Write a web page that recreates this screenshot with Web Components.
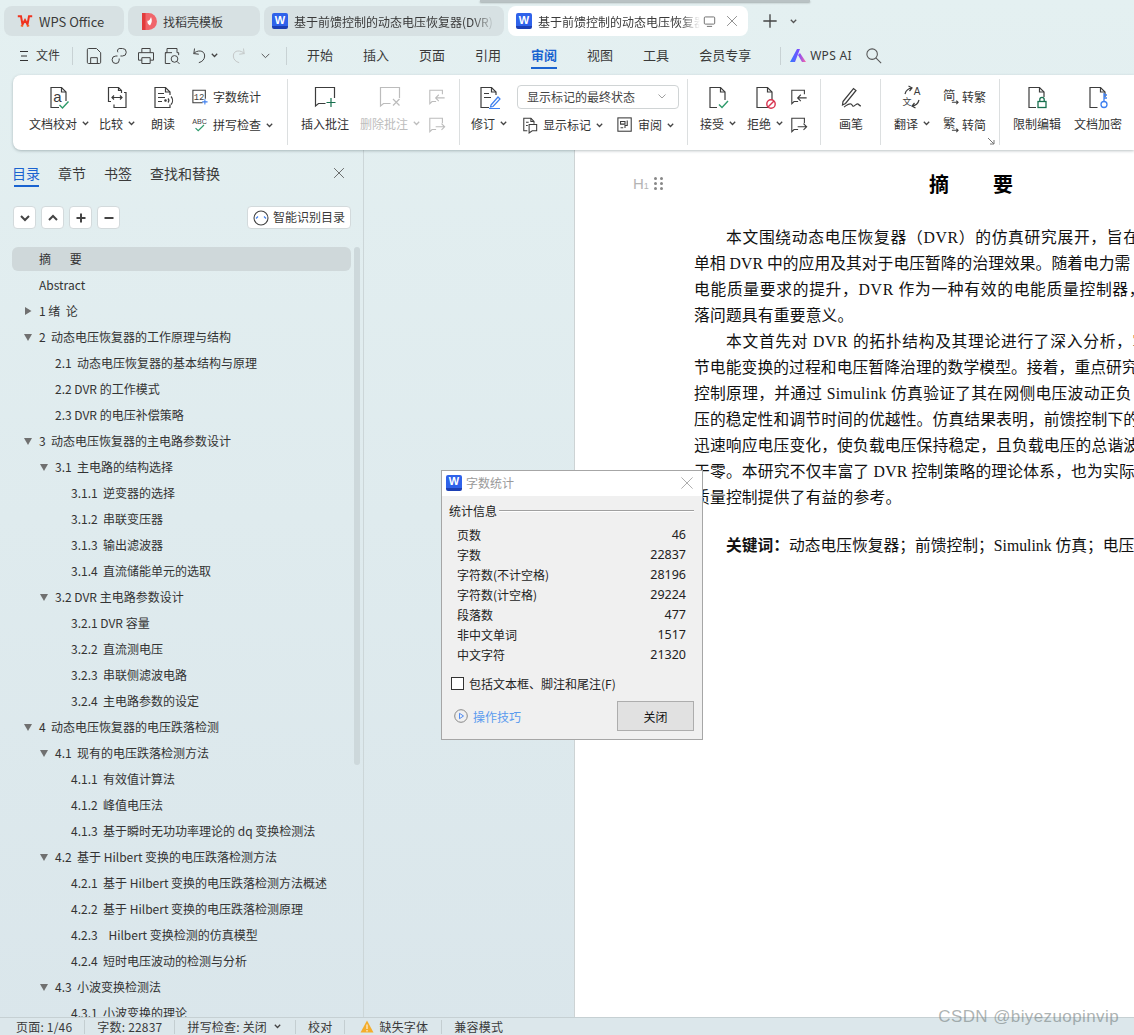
<!DOCTYPE html>
<html lang="zh-CN">
<head>
<meta charset="utf-8">
<title>WPS 审阅</title>
<style>
  html, body { margin: 0; padding: 0; height: 100%; overflow: hidden; }
  body { font-family: "Noto Sans CJK SC", "Noto Sans", sans-serif; color: #333; }
</style>
</head>
<body>
<wps-app></wps-app>
<script>
const UI_FONT = '"Noto Sans CJK SC", "Noto Sans", sans-serif';
const SVG_FONT = UI_FONT.replace(/"/g, "'");
const G = '#2e9a6b', B = '#3d7ff0', R = '#d8334f', D = '#3c3c3c', L = '#bcbcbc';
const page = 'M4 2.5h10.5l4.5 4.5v15.5H4z';
const fold = 'M14.5 2.5V7H19';
const label = (x, y, size, t, font) => `<text x="${x}" y="${y}" font-size="${size}" text-anchor="middle" fill="${D}" stroke="none" font-family="${font || 'Liberation Sans'}">${t}</text>`;

const ICONS = {
  proof: `<path d="M12 22.500H4v-20h10.500L19 7v9"/><path d="${fold}"/>${label(10.5, 16.5, 15, 'a')}<path d="M12.500 20l3 3 6-6.500" stroke="${G}" stroke-width="1.400"/>`,
  compare: `<path d="M6 16.500H3.500v-14h10l3 3v2.500M19 7.500h2v15H9v-3"/><path d="M13.500 2.500v3h3"/><path d="M7 12.500h10M9 10.500l-2 2 2 2M15 10.500l2 2-2 2"/>`,
  read: `<path d="M19 10V7l-4.500-4.500H4v20h15v-3"/><path d="${fold}"/><path d="M7 8.500h6M7 12.500h7M7 16.500h4"/><path d="M17 13.500a3 3 0 0 1 0 4M20 11.500a6 6 0 0 1 0 8"/><circle cx="14.500" cy="15.500" r=".7" fill="${D}"/>`,
  count: `<path d="M12 15.500H1v-14h14V11"/>${label(8, 12, 10, '12', 'Liberation Mono')}<path d="M14.500 11.500v6M11.500 14.500h6" stroke="${B}"/>`,
  spell: `${label(8.5, 8, 8, 'ABC')}<path d="M4 12.500l3 3 6.500-6.500" stroke="${G}" stroke-width="1.300"/>`,
  cmtAdd: `<path d="M12.500 18.500H5.500L2.500 21V2.500h19V13"/><path d="M18 13v9M13.500 17.500h9" stroke="#17704f"/>`,
  cmtDel: `<path d="M12.500 18.500H5.500L2.500 21V2.500h19V13"/><path d="M15 14l6.500 6.500M21.500 14L15 20.500"/>`,
  cmtPrev: `<path d="M9 15H4.500L2 17.500V2.500h14V7"/><path d="M8.500 11h10M12 7.500L8.500 11l3.500 3.500"/>`,
  cmtNext: `<path d="M9 15H4.500L2 17.500V2.500h14V8"/><path d="M8.500 12h10M15 8.500l3.500 3.500-3.500 3.500"/>`,
  track: `<path d="M12 22.500H4v-20h10.500L19 7v3"/><path d="${fold}"/><path d="M7 8.500h5M7 12.500h7"/><path d="M14 20l7-8 2 2-7 7.500-2.500.5zM12 23.500h11" stroke="${B}"/>`,
  marks: `<path d="M6 15.500H2V1.500h8l3.500 3.500v2.500"/><path d="M10 1.500V5h3.500"/><path d="M4.500 6h3M4.500 9.500h2"/><path d="M8 8.500h8.500v7h-5L8 18z"/>`,
  pane: `<rect x="1" y="1" width="15" height="15"/><path d="M4 5h5v3H4zM11.500 4v5.500h-2.500v3M4 12h3"/>`,
  accept: `<path d="M11 22.500H4v-20h10.500L19 7v8"/><path d="${fold}"/><path d="M13 19.500l3 3 6-6.500" stroke="${G}" stroke-width="1.400"/>`,
  reject: `<path d="${page}"/><path d="${fold}"/><circle cx="18" cy="19" r="4.200" stroke="${R}" stroke-width="1.400" fill="#fff"/><path d="M15 22l6-6" stroke="${R}" stroke-width="1.400"/>`,
  pen: `<path d="M4 16.500L14.500 3.500l2.500 2L6.500 18.500 3.500 20z"/><path d="M5 22c3-2 5-4 7-3s1 3 3 2 3-3 4-2 2 2 3 2"/>`,
  translate: `<path d="M5 9a8 8 0 0 1 7-6M8.500 1l3.500 2-2.500 3"/><path d="M19 15a8 8 0 0 1-7 6M15.500 23L12 21l2.500-3"/>${label(17, 10, 10, 'A')}${label(7, 20, 9, '文', SVG_FONT)}`,
  toTrad: `${label(7, 12, 14, '简', SVG_FONT)}<path d="M10 15h7M15 13l2 2-2 2"/>`,
  toSimp: `${label(7, 12, 14, '繁', SVG_FONT)}<path d="M10 15h7M15 13l2 2-2 2"/>`,
  lock: `<path d="M11 22.500H4v-20h10.500L19 7v5"/><path d="${fold}"/><rect x="13" y="16.500" width="8" height="6" stroke="#17704f" stroke-width="1.300"/><path d="M14.800 16.500v-2a2.200 2.200 0 0 1 4.400 0v2" stroke="#17704f" stroke-width="1.300"/>`,
  key: `<path d="M11.500 22.500H4v-20h10.500L19 7v5"/><path d="${fold}"/><circle cx="18" cy="19.500" r="3" stroke="${B}" stroke-width="1.300"/><path d="M18 16.500V8M18 10h3M18 13h3" stroke="${B}" stroke-width="1.300"/>`,
  launch: `<path d="M1 1l6 6M7 3v4H3" stroke="#777"/>`,
  save: `<path d="M4 4.500a1.500 1.500 0 0 1 1.500-1.500H15l5 5v11.500a1.500 1.500 0 0 1-1.500 1.500h-13A1.500 1.500 0 0 1 4 19.500z"/><path d="M8 21v-7h8v7"/>`,
  link: `<path d="M11 3h4a4.500 4.500 0 0 1 0 9h-2.500"/><path d="M11 3a3 3 0 0 0-1.500 4.500"/><path d="M9 12H7a4.500 4.500 0 0 0 0 9 4 4 0 0 0 4-4v-2"/>`,
  print: `<path d="M7 8V3h10v5M7 17H3V8h18v9h-4"/><path d="M7 14h10v7H7z"/>`,
  preview: `<path d="M10 21H4V8h2V3h12v5h2v3"/><path d="M4 8h8"/><circle cx="15" cy="15.500" r="4"/><path d="M18 18.500l3 3"/>`,
  undo: `<path d="M7 9c3-4 13-5 13 3 0 4-3 7-7 8"/><path d="M7 3v6h6" transform="rotate(8 7 9)"/>`,
  redo: `<path d="M17 9c-3-4-13-5-13 3 0 4 3 7 7 8"/><path d="M17 3v6h-6" transform="rotate(-8 17 9)"/>`,
  chevLg: `<path d="M5 9l7 7 7-7"/>`,
  search: `<circle cx="9.500" cy="9.500" r="7"/><path d="M14.500 14.500l7 7"/>`,
  close: `<path d="M3 3l14 14M17 3L3 17"/>`,
  plus: `<path d="M12 2v20M2 12h20"/>`,
  monitor: `<rect x="2" y="3" width="16" height="11" rx="1.500"/><path d="M6 17.500h8"/>`
};

function icon(name, size, color, sw, vb) {
  return `<svg width="${size}" height="${size}" viewBox="0 0 ${vb || 24} ${vb || 24}" fill="none" stroke="${color || D}" stroke-width="${sw || 1.2}" style="overflow:visible;display:block;flex:none">${ICONS[name]}</svg>`;
}
function chev(color) {
  return `<svg width="7" height="5" viewBox="0 0 7 5" fill="none" stroke="${color || '#444'}" stroke-width="1.300" style="display:block;flex:none"><path d="M.8 .8L3.500 3.500 6.200 .8"/></svg>`;
}
const wordIcon = size => `<span style="flex:none;width:${size}px;height:${size}px;border-radius:2px;background:linear-gradient(#2f62ea 80%,#1c3fb4 80%);color:#fff;font:bold ${size - 5}px/1 'Liberation Sans',sans-serif;display:flex;align-items:center;justify-content:center;padding-bottom:2px;box-sizing:border-box">W</span>`;

class WpsTab extends HTMLElement {
  constructor() { super(); this.attachShadow({ mode: 'open' }); }
  connectedCallback() {
    const active = this.hasAttribute('active');
    this.shadowRoot.innerHTML = `
      <style>
        :host { display: flex; align-items: center; height: 30px; box-sizing: border-box; border-radius: 8px; background: ${active ? '#fff' : '#d7e1e3'}; font: 12px ${UI_FONT}; color: #3a3a3a; flex: none; }
        .t { flex: 1; min-width: 0; white-space: nowrap; overflow: hidden; -webkit-mask-image: linear-gradient(90deg,#000 88%,transparent); mask-image: linear-gradient(90deg,#000 88%,transparent); }
        .t.plain { -webkit-mask-image: none; mask-image: none; }
      </style>
      <slot name="icon"></slot><div class="t ${this.hasAttribute('plain') ? 'plain' : ''}"><slot></slot></div><slot name="tail"></slot>`;
  }
}
customElements.define('wps-tab', WpsTab);

class WpsTabbar extends HTMLElement {
  constructor() { super(); this.attachShadow({ mode: 'open' }); }
  connectedCallback() {
    this.shadowRoot.innerHTML = `
      <style>
        :host { display: flex; gap: 4px; height: 36px; box-sizing: border-box; padding: 6px 0 0 4px; align-items: flex-start; position: relative; }
        .shade { position: absolute; left: 480px; top: 0; width: 330px; height: 2px; background: #b9c2c4; box-shadow: 0 1px 2px rgba(0,0,0,.3); }
        .add { display: flex; align-items: center; height: 30px; margin-left: 10px; gap: 12px; }
      </style>
      <div class="shade"></div>
      <wps-tab plain style="width:120px;font-size:13px">
        <span slot="icon" style="display:flex;margin:0 6px 0 13px">
          <svg width="16" height="12" viewBox="0 0 16 12" fill="none" stroke="#f0331f" stroke-width="2"><path d="M.8 1.200h3.200L5.500 9.500 8 5l2.500 4.500L12 1.200h3.200"/><path d="M3.800 10.800h2.400M9.800 10.800h2.400" stroke="#f5601f" stroke-width="1.500"/></svg>
        </span>WPS Office</wps-tab>
      <wps-tab plain style="width:132px">
        <span slot="icon" style="display:flex;margin:0 6px 0 14px">
          <svg width="15" height="17" viewBox="0 0 15 17"><path d="M0 0h6.500a8 8 0 0 1 0 17H0z" fill="#f0656a"/><path d="M0 0h3.500v17H0z" fill="#e23c3c"/><path d="M9 4c1 3 1.500 5-1 8.500-2-1-3-3-2.500-5 1.200 1 2.500-.5 3.500-3.500z" fill="#fff"/></svg>
        </span>找稻壳模板</wps-tab>
      <wps-tab style="width:240px;padding-right:8px">
        <span slot="icon" style="display:flex;margin:0 6px 0 8px">${wordIcon(16)}</span>基于前馈控制的动态电压恢复器(DVR)</wps-tab>
      <wps-tab active style="width:240px;padding-right:9px">
        <span slot="icon" style="display:flex;margin:0 6px 0 8px">${wordIcon(16)}</span>基于前馈控制的动态电压恢复器
        <span slot="tail" style="display:flex;align-items:center;gap:9px;margin-left:3px">${icon('monitor', 13, '#666', 1.400, 20)}${icon('close', 14, '#888', 1.300, 20)}</span></wps-tab>
      <div class="add">${icon('plus', 16, '#444', 2)}${chev('#555')}</div>`;
  }
}
customElements.define('wps-tabbar', WpsTabbar);

class WpsMenubar extends HTMLElement {
  constructor() { super(); this.attachShadow({ mode: 'open' }); }
  connectedCallback() {
    const items = ['开始', '插入', '页面', '引用', '审阅', '视图', '工具', '会员专享'];
    const tools = ['save', 'link', 'print', 'preview'];
    this.shadowRoot.innerHTML = `
      <style>
        :host { display: flex; align-items: center; height: 39px; padding-left: 20px; font: 13px ${UI_FONT}; color: #3a3a3a; }
        .sep { width: 1px; height: 18px; background: #c8d2d4; flex: none; }
        .file { font-size: 12px; margin-left: 8px; padding-bottom: 2px; }
        .tools { display: flex; align-items: center; gap: 6px; margin-left: 11px; }
        .items { display: flex; gap: 30px; margin: 0 29px 0 20px; padding-bottom: 2px; }
        .items span { position: relative; }
        .items .on { color: #1a63d0; font-weight: 700; }
        .items .on::after { content: ""; position: absolute; left: 0; right: 0; top: 22px; height: 2px; background: #1a63d0; }
        .ai { display: flex; align-items: center; gap: 4px; margin-left: 9px; font: 12px "Noto Sans", sans-serif; letter-spacing: .3px; }
      </style>
      <svg width="8" height="10" viewBox="0 0 8 10" stroke="#333" fill="none"><path d="M0 .5h8M1 5h6M0 9.500h8"/></svg>
      <span class="file">文件</span>
      <div class="sep" style="margin-left:12px"></div>
      <div class="tools">
        ${tools.map(t => icon(t, 20, '#444')).join('')}
        ${icon('undo', 20, '#444')}<span style="margin-left:-3px">${chev()}</span>
        <span style="margin-left:6px">${icon('redo', 20, '#c4c8c8')}</span>
        <span style="margin-left:3px">${icon('chevLg', 13, '#555', 1.800)}</span>
      </div>
      <div class="sep" style="margin-left:14px"></div>
      <div class="items">${items.map(i => `<span class="${i === '审阅' ? 'on' : ''}">${i}</span>`).join('')}</div>
      <div class="sep"></div>
      <div class="ai">
        <svg width="16" height="14" viewBox="0 0 16 14"><defs><linearGradient id="ai" x1="0" x2="1"><stop offset="0" stop-color="#2f7bff"/><stop offset=".55" stop-color="#7c4dff"/><stop offset="1" stop-color="#ff6aa0"/></linearGradient></defs><path d="M0 13L7 0h3L5 13zM8 6l2-2 6 9h-4z" fill="url(#ai)"/></svg>
        <span>WPS AI</span>
      </div>
      <span style="margin-left:13px">${icon('search', 18, '#555', 1.400)}</span>`;
  }
}
customElements.define('wps-menubar', WpsMenubar);

class RbGroup extends HTMLElement {
  constructor() { super(); this.attachShadow({ mode: 'open' }); }
  connectedCallback() {
    this.style.width = this.getAttribute('w') + 'px';
    this.style.paddingLeft = (this.getAttribute('pad') || 0) + 'px';
    this.shadowRoot.innerHTML = `
      <style>
        :host { display: flex; box-sizing: border-box; height: 66px; padding-top: 4px; border-right: 1px solid #dcdfe0; flex: none; position: relative; }
        :host([last]) { border-right: 0; }
      </style><slot></slot>`;
  }
}
customElements.define('rb-group', RbGroup);

class RbBtn extends HTMLElement {
  constructor() { super(); this.attachShadow({ mode: 'open' }); }
  connectedCallback() {
    const off = this.hasAttribute('off');
    this.style.width = this.getAttribute('w') + 'px';
    this.shadowRoot.innerHTML = `
      <style>
        :host { display: flex; flex-direction: column; align-items: center; flex: none; font: 12px ${UI_FONT}; color: ${off ? '#bdbdbd' : '#333'}; }
        .i { height: 28px; display: flex; align-items: center; }
        .l { height: 24px; display: flex; align-items: center; gap: 5px; white-space: nowrap; }
      </style>
      <div class="i">${icon(this.getAttribute('icon'), 24, off ? L : D)}</div>
      <div class="l">${this.getAttribute('label')}${this.hasAttribute('chev') ? chev(off ? L : '#444') : ''}</div>`;
  }
}
customElements.define('rb-btn', RbBtn);

class RbSmall extends HTMLElement {
  constructor() { super(); this.attachShadow({ mode: 'open' }); }
  connectedCallback() {
    const off = this.hasAttribute('off');
    const text = this.getAttribute('label');
    const size = this.getAttribute('size') || 16;
    const gap = this.getAttribute('gap') || 5;
    this.shadowRoot.innerHTML = `
      <style>
        :host { display: flex; align-items: center; height: 28px; gap: ${gap}px; font: 12px ${UI_FONT}; color: #333; white-space: nowrap; flex: none; }
        span { padding-bottom: 2px; }
      </style>
      ${icon(this.getAttribute('icon'), size, off ? L : D, 1.200, this.getAttribute('vb') || 18)}
      ${text ? `<span>${text}</span>` : ''}${this.hasAttribute('chev') ? chev() : ''}`;
  }
}
customElements.define('rb-small', RbSmall);

class RbCol extends HTMLElement {
  constructor() {
    super();
    this.attachShadow({ mode: 'open' }).innerHTML = `<style>:host { display: flex; flex-direction: column; flex: none; }</style><slot></slot>`;
  }
}
customElements.define('rb-col', RbCol);

class RbSelect extends HTMLElement {
  constructor() { super(); this.attachShadow({ mode: 'open' }); }
  connectedCallback() {
    this.shadowRoot.innerHTML = `
      <style>
        :host { display: flex; align-items: center; justify-content: space-between; box-sizing: border-box; width: 162px; height: 24px; margin: 2px 0; padding: 0 10px 2px 9px; border: 1px solid #d0d4d5; border-radius: 4px; font: 12px ${UI_FONT}; color: #444; }
      </style><slot></slot>${icon('chevLg', 12, '#777', 1.400)}`;
  }
}
customElements.define('rb-select', RbSelect);

class WpsRibbon extends HTMLElement {
  constructor() { super(); this.attachShadow({ mode: 'open' }); }
  connectedCallback() {
    this.shadowRoot.innerHTML = `
      <style>
        :host { display: flex; box-sizing: border-box; height: 75px; margin-left: 13px; padding: 4px 0; background: #fff; border-radius: 8px 0 0 8px; box-shadow: 0 1px 3px rgba(60,80,85,.35); position: relative; z-index: 2; }
        .launch { position: absolute; right: 4px; bottom: 0; }
      </style>
      <rb-group w="275" pad="11">
        <rb-btn icon="proof" label="文档校对" w="70" chev></rb-btn>
        <rb-btn icon="compare" label="比较" w="46" chev></rb-btn>
        <rb-btn icon="read" label="朗读" w="46"></rb-btn>
        <rb-col style="margin-left:6px">
          <rb-small icon="count" label="字数统计"></rb-small>
          <rb-small icon="spell" label="拼写检查" chev></rb-small>
        </rb-col>
      </rb-group>
      <rb-group w="172" pad="7">
        <rb-btn icon="cmtAdd" label="插入批注" w="60"></rb-btn>
        <rb-btn icon="cmtDel" label="删除批注" w="70" off chev></rb-btn>
        <rb-col style="margin-left:3px">
          <rb-small icon="cmtPrev" size="18" off vb="20"></rb-small>
          <rb-small icon="cmtNext" size="18" off vb="20"></rb-small>
        </rb-col>
      </rb-group>
      <rb-group w="228" pad="6">
        <rb-btn icon="track" label="修订" w="46" chev></rb-btn>
        <rb-col style="margin-left:5px">
          <rb-select>显示标记的最终状态</rb-select>
          <div style="display:flex;padding-left:5px">
            <rb-small icon="marks" label="显示标记" chev style="width:95px"></rb-small>
            <rb-small icon="pane" label="审阅" chev></rb-small>
          </div>
        </rb-col>
      </rb-group>
      <rb-group w="133" pad="7">
        <rb-btn icon="accept" label="接受" w="46" chev></rb-btn>
        <rb-btn icon="reject" label="拒绝" w="46" chev style="margin-left:1px"></rb-btn>
        <rb-col style="margin-left:2px">
          <rb-small icon="cmtPrev" size="18" vb="20"></rb-small>
          <rb-small icon="cmtNext" size="18" vb="20"></rb-small>
        </rb-col>
      </rb-group>
      <rb-group w="60">
        <rb-btn icon="pen" label="画笔" w="60"></rb-btn>
      </rb-group>
      <rb-group w="119" pad="8">
        <rb-btn icon="translate" label="翻译" w="46" chev></rb-btn>
        <rb-col style="margin-left:8px">
          <rb-small icon="toTrad" label="转繁" gap="3"></rb-small>
          <rb-small icon="toSimp" label="转简" gap="3"></rb-small>
        </rb-col>
        <span class="launch">${icon('launch', 8, '#777', 1, 8)}</span>
      </rb-group>
      <rb-group w="134" pad="7" last>
        <rb-btn icon="lock" label="限制编辑" w="60"></rb-btn>
        <rb-btn icon="key" label="文档加密" w="60" style="margin-left:1px"></rb-btn>
      </rb-group>`;
  }
}
customElements.define('wps-ribbon', WpsRibbon);

class TocItem extends HTMLElement {
  constructor() { super(); this.attachShadow({ mode: 'open' }); }
  connectedCallback() {
    const lv = +this.getAttribute('lv');
    const tw = this.getAttribute('tw');
    const left = 28 + (lv - 1) * 16;
    const arrow = tw === 'o'
      ? '<path d="M0 1l8 0-4 7z" fill="#707070"/>'
      : tw === 'c' ? '<path d="M1 0l6.500 4-6.500 4z" fill="#707070"/>' : '';
    this.shadowRoot.innerHTML = `
      <style>
        :host { display: flex; align-items: center; box-sizing: border-box; height: 24px; flex: none; padding: 0 0 1px ${left - 16}px; border-radius: 6px; font: 12px ${UI_FONT}; color: #333; white-space: pre; }
        :host([sel]) { background: #cfd8da; }
        svg { flex: none; width: 8px; height: 8px; margin-right: 7px; }
      </style>
      <svg viewBox="0 0 8 8">${arrow}</svg><slot></slot>`;
  }
}
customElements.define('toc-item', TocItem);

class TocButton extends HTMLElement {
  constructor() { super(); this.attachShadow({ mode: 'open' }); }
  connectedCallback() {
    const paths = { down: 'M3 5l4 4 4-4', up: 'M3 9l4-4 4 4', plus: 'M2.500 7h9M7 2.500v9', minus: 'M2.500 7h9' };
    this.shadowRoot.innerHTML = `
      <style>
        :host { display: flex; align-items: center; justify-content: center; width: 23px; height: 23px; box-sizing: border-box; background: #fff; border: 1px solid #d3dadc; border-radius: 4px; flex: none; }
      </style>
      <svg width="14" height="14" viewBox="0 0 14 14" fill="none" stroke="#444" stroke-width="2"><path d="${paths[this.getAttribute('kind')]}"/></svg>`;
  }
}
customElements.define('toc-button', TocButton);

const TOC = [
  [1, '', '摘       要', 1], [1, '', 'Abstract'], [1, 'c', '1 绪  论'],
  [1, 'o', '2  动态电压恢复器的工作原理与结构'],
  [2, '', '2.1  动态电压恢复器的基本结构与原理'], [2, '', '2.2 DVR 的工作模式'], [2, '', '2.3 DVR 的电压补偿策略'],
  [1, 'o', '3  动态电压恢复器的主电路参数设计'],
  [2, 'o', '3.1  主电路的结构选择'],
  [3, '', '3.1.1  逆变器的选择'], [3, '', '3.1.2  串联变压器'], [3, '', '3.1.3  输出滤波器'], [3, '', '3.1.4  直流储能单元的选取'],
  [2, 'o', '3.2 DVR 主电路参数设计'],
  [3, '', '3.2.1 DVR 容量'], [3, '', '3.2.2  直流测电压'], [3, '', '3.2.3  串联侧滤波电路'], [3, '', '3.2.4  主电路参数的设定'],
  [1, 'o', '4  动态电压恢复器的电压跌落检测'],
  [2, 'o', '4.1  现有的电压跌落检测方法'],
  [3, '', '4.1.1  有效值计算法'], [3, '', '4.1.2  峰值电压法'], [3, '', '4.1.3  基于瞬时无功功率理论的 dq 变换检测法'],
  [2, 'o', '4.2  基于 Hilbert 变换的电压跌落检测方法'],
  [3, '', '4.2.1  基于 Hilbert 变换的电压跌落检测方法概述'], [3, '', '4.2.2  基于 Hilbert 变换的电压跌落检测原理'],
  [3, '', '4.2.3    Hilbert 变换检测的仿真模型'], [3, '', '4.2.4  短时电压波动的检测与分析'],
  [2, 'o', '4.3  小波变换检测法'],
  [3, '', '4.3.1  小波变换的理论']
];

class TocPanel extends HTMLElement {
  constructor() { super(); this.attachShadow({ mode: 'open' }); }
  connectedCallback() {
    const tabs = ['目录', '章节', '书签', '查找和替换'];
    this.shadowRoot.innerHTML = `
      <style>
        :host { display: flex; flex-direction: column; flex: none; width: 364px; box-sizing: border-box; border-right: 1px solid #ccd6d8; padding-top: 13px; overflow: hidden; font: 14px ${UI_FONT}; color: #3a3a3a; }
        .tabs { display: flex; align-items: center; height: 20px; padding: 0 17px 0 12px; gap: 18px; flex: none; }
        .tabs span { position: relative; }
        .tabs .on { color: #1a63d0; }
        .tabs .on::after { content: ""; position: absolute; left: 2px; right: 1px; top: 22px; height: 2px; background: #1a63d0; }
        .tabs svg { margin-left: auto; }
        .bar { display: flex; align-items: center; gap: 5px; padding: 0 12px 0 13px; margin-top: 23px; height: 23px; flex: none; }
        .smart { margin-left: auto; display: flex; align-items: center; gap: 4px; height: 23px; width: 104px; box-sizing: border-box; padding-left: 5px; background: #fff; border: 1px solid #d3dadc; border-radius: 4px; font-size: 12px; white-space: nowrap; }
        .smart span { padding-bottom: 2px; }
        .body { display: flex; gap: 3px; margin-top: 17px; flex: 1; min-height: 0; padding-left: 12px; }
        .list { width: 339px; flex: none; display: flex; flex-direction: column; gap: 2px; padding-top: 1px; }
        .scroll { width: 6px; height: 518px; margin-top: 1px; background: #cdd8db; border-radius: 3px; flex: none; }
      </style>
      <div class="tabs">
        ${tabs.map((t, i) => `<span class="${i ? '' : 'on'}">${t}</span>`).join('')}
        ${icon('close', 14, '#555', 1.200, 20)}
      </div>
      <div class="bar">
        <toc-button kind="down"></toc-button><toc-button kind="up"></toc-button><toc-button kind="plus"></toc-button><toc-button kind="minus"></toc-button>
        <div class="smart">
          <svg width="16" height="16" viewBox="0 0 16 16" fill="none"><circle cx="8" cy="8" r="7" stroke="#444" stroke-width="1.100"/><path d="M3 8.500L5 6.500M13 8.500L11 6.500" stroke="${B}" stroke-width="1.100"/></svg>
          <span>智能识别目录</span>
        </div>
      </div>
      <div class="body">
        <div class="list">${TOC.map(r => `<toc-item lv="${r[0]}" tw="${r[1]}"${r[3] ? ' sel' : ''}>${r[2]}</toc-item>`).join('')}</div>
        <div class="scroll"></div>
      </div>`;
  }
}
customElements.define('toc-panel', TocPanel);

class DocPage extends HTMLElement {
  constructor() { super(); this.attachShadow({ mode: 'open' }); }
  connectedCallback() {
    // the paragraphs are justified in the source, so each line has its own spacing
    const lines = [
      ['本文围绕动态电压恢复器（DVR）的仿真研究展开，旨在', .7, 1],
      ['单相 DVR 中的应用及其对于电压暂降的治理效果。随着电力需', .05],
      ['电能质量要求的提升，DVR 作为一种有效的电能质量控制器，', .7],
      ['落问题具有重要意义。', .2],
      ['本文首先对 DVR 的拓扑结构及其理论进行了深入分析，掌', .7, 1],
      ['节电能变换的过程和电压暂降治理的数学模型。接着，重点研究', .1],
      ['控制原理，并通过 Simulink 仿真验证了其在网侧电压波动正负', .3],
      ['压的稳定性和调节时间的优越性。仿真结果表明，前馈控制下的', .15],
      ['迅速响应电压变化，使负载电压保持稳定，且负载电压的总谐波', .15],
      ['干零。本研究不仅丰富了 DVR 控制策略的理论体系，也为实际', .2],
      ['质量控制提供了有益的参考。', .2]
    ];
    this.shadowRoot.innerHTML = `
      <style>
        :host { display: block; flex: 1; min-width: 0; background: #fff; border-left: 1px solid #cdd3d4; overflow: hidden; font: 15.750px/26px "Liberation Serif", "Noto Sans CJK SC", serif; color: #111; }
        .head { display: flex; align-items: center; height: 28px; margin-top: 19px; padding-left: 58px; }
        .h { color: #b4b4b4; font: 15px "Liberation Sans", sans-serif; width: 15px; white-space: nowrap; }
        .h small { font-size: 9px; }
        .grip { display: grid; grid-template-columns: 3px 3px; gap: 2px 3px; margin-left: 6px; }
        .grip i { width: 3px; height: 3px; border-radius: 50%; background: #888; }
        h1 { margin: 0 0 0 266px; font: bold 20px "Noto Sans CJK SC", serif; display: flex; gap: 44px; color: #000; }
        .txt { padding: 28px 0 0 119px; white-space: nowrap; }
        .txt p { margin: 0; height: 26px; }
        .txt p.in { text-indent: 32px; }
        .txt p.kw { margin-top: 22px; text-indent: 32px; }
      </style>
      <div class="head">
        <span class="h">H<small>1</small></span>
        <span class="grip">${'<i></i>'.repeat(6)}</span>
        <h1><span>摘</span><span>要</span></h1>
      </div>
      <div class="txt">
        ${lines.map(l => `<p class="${l[2] ? 'in' : ''}" style="letter-spacing:${l[1]}px">${l[0]}</p>`).join('')}
        <p class="kw"><b>关键词：</b>动态电压恢复器；前馈控制；Simulink 仿真；电压</p>
      </div>`;
  }
}
customElements.define('doc-page', DocPage);

class StatsDialog extends HTMLElement {
  constructor() { super(); this.attachShadow({ mode: 'open' }); }
  connectedCallback() {
    const rows = [['页数', '46'], ['字数', '22837'], ['字符数(不计空格)', '28196'], ['字符数(计空格)', '29224'], ['段落数', '477'], ['非中文单词', '1517'], ['中文字符', '21320']];
    this.shadowRoot.innerHTML = `
      <style>
        :host { position: absolute; left: 441px; top: 470px; width: 262px; height: 270px; box-sizing: border-box; display: flex; flex-direction: column; background: #f0f0f0; border: 1px solid #a6a6a6; font: 12px ${UI_FONT}; color: #222; z-index: 5; }
        .title { display: flex; align-items: center; height: 25px; background: #fff; padding: 0 7px 2px 4px; box-sizing: border-box; gap: 4px; flex: none; color: #9a9a9a; }
        .title svg { margin-left: auto; }
        .body { flex: 1; display: flex; flex-direction: column; padding: 4px 8px 8px 7px; }
        .legend { display: flex; align-items: center; gap: 2px; height: 20px; }
        .legend i { flex: 1; height: 0; border-top: 1px solid #a0a0a0; border-bottom: 1px solid #fff; margin-top: 1px; }
        .rows { padding: 4px 8px 0 8px; }
        .row { display: flex; justify-content: space-between; height: 20px; align-items: center; }
        .row b { font: 400 12.500px "Noto Sans", sans-serif; }
        .chk { display: flex; align-items: center; gap: 5px; margin: 9px 0 0 2px; height: 20px; }
        .chk i { width: 13px; height: 13px; border: 1px solid #333; background: #fff; box-sizing: border-box; }
        .foot { display: flex; align-items: center; justify-content: space-between; margin-top: 8px; padding-left: 5px; }
        .tip { display: flex; align-items: center; gap: 5px; color: #5a9bee; }
        .btn { width: 77px; height: 30px; display: flex; align-items: center; justify-content: center; background: #e1e1e1; border: 1px solid #adadad; box-sizing: border-box; color: #111; }
      </style>
      <div class="title">${wordIcon(16)}<span>字数统计</span>${icon('close', 16, '#999', 1, 20)}</div>
      <div class="body">
        <div class="legend"><span>统计信息</span><i></i></div>
        <div class="rows">${rows.map(r => `<div class="row"><span>${r[0]}</span><b>${r[1]}</b></div>`).join('')}</div>
        <div class="chk"><i></i><span>包括文本框、脚注和尾注(F)</span></div>
        <div class="foot">
          <div class="tip">
            <svg width="14" height="14" viewBox="0 0 14 14" fill="none"><circle cx="7" cy="7" r="6.300" stroke="#888"/><path d="M5.500 4.300L9.500 7l-4 2.700z" stroke="${B}" stroke-width=".9"/></svg>
            <span>操作技巧</span>
          </div>
          <div class="btn">关闭</div>
        </div>
      </div>`;
  }
}
customElements.define('stats-dialog', StatsDialog);

class StatusBar extends HTMLElement {
  constructor() { super(); this.attachShadow({ mode: 'open' }); }
  connectedCallback() {
    this.shadowRoot.innerHTML = `
      <style>
        :host { display: flex; align-items: center; height: 18px; box-sizing: border-box; flex: none; padding-left: 16px; background: #dce7eb; border-top: 1px solid #c6d0d3; font: 12px ${UI_FONT}; color: #3a3a3a; white-space: nowrap; position: relative; z-index: 2; letter-spacing: .2px; }
        i { width: 1px; height: 14px; background: #c4ced1; margin: 0 12px; flex: none; }
        .wm { position: absolute; right: 15px; top: -11px; font: 17px "Liberation Sans", sans-serif; color: rgba(120,130,130,.6); letter-spacing: .4px; }
      </style>
      <span>页面: 1/46</span><i></i>
      <span>字数: 22837</span><i></i>
      <span>拼写检查: 关闭</span><span style="margin-left:7px">${chev()}</span><i style="margin-left:14px"></i>
      <span>校对</span><i></i>
      <svg width="14" height="13" viewBox="0 0 14 13" style="margin:0 5px 0 3px"><path d="M7 .5L13.500 12.500H.5z" fill="#f4ad2c"/><path d="M7 4.500v4.500M7 10v1.500" stroke="#fff"/></svg>
      <span>缺失字体</span><i style="margin-left:13px"></i>
      <span>兼容模式</span>
      <span class="wm">CSDN @biyezuopinvip</span>`;
  }
}
customElements.define('status-bar', StatusBar);

class WpsApp extends HTMLElement {
  constructor() { super(); this.attachShadow({ mode: 'open' }); }
  connectedCallback() {
    this.shadowRoot.innerHTML = `
      <style>
        :host { display: flex; flex-direction: column; position: relative; width: 100%; height: 100vh; overflow: hidden; background: linear-gradient(#e4f0f1, #dae6eb); }
        .main { display: flex; flex: 1; min-height: 0; }
        .gutter { width: 210px; flex: none; }
      </style>
      <wps-tabbar></wps-tabbar>
      <wps-menubar></wps-menubar>
      <wps-ribbon></wps-ribbon>
      <div class="main">
        <toc-panel></toc-panel>
        <div class="gutter"></div>
        <doc-page></doc-page>
      </div>
      <status-bar></status-bar>
      <stats-dialog></stats-dialog>`;
  }
}
customElements.define('wps-app', WpsApp);
</script>
</body>
</html>
